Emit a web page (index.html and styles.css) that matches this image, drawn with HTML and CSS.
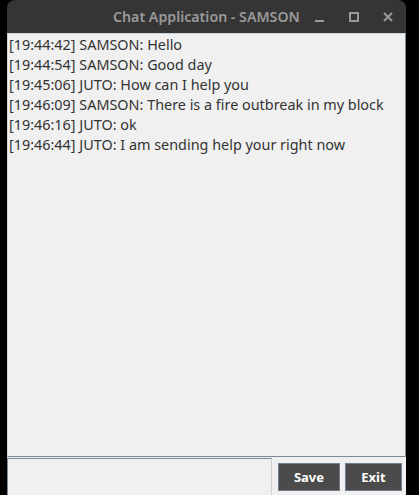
FILE: index.html
```html
<!DOCTYPE html>
<html>
<head>
<meta charset="utf-8">
<link rel="stylesheet" href="styles.css">
</head>
<body>
<div class="window">
  <div class="titlebar">
    <span class="title">Chat Application - SAMSON</span>
    <div class="controls">
      <span class="ctl min"></span>
      <span class="ctl max"></span>
      <svg class="ctl close" width="10" height="10" viewBox="0 0 10 10"><path d="M1 1L9 9M9 1L1 9" stroke="#9a9a9a" stroke-width="2"/></svg>
    </div>
  </div>
  <div class="content">
    <div class="log">
      <div class="line">[19:44:42] SAMSON: Hello</div>
      <div class="line">[19:44:54] SAMSON: Good day</div>
      <div class="line">[19:45:06] JUTO: How can I help you</div>
      <div class="line">[19:46:09] SAMSON: There is a fire outbreak in my block</div>
      <div class="line">[19:46:16] JUTO: ok</div>
      <div class="line">[19:46:44] JUTO: I am sending help your right now</div>
    </div>
    <div class="bottom">
      <div class="input"></div>
      <div class="buttons">
        <button class="btn save">Save</button>
        <button class="btn exit">Exit</button>
      </div>
    </div>
  </div>
</div>
</body>
</html>
```
FILE: styles.css
```css
html, body {
  margin: 0;
  padding: 0;
  background: #000;
  height: 495px;
  overflow: hidden;
}
.window {
  margin-left: 7px;
  width: 399px;
  height: 495px;
  display: flex;
  flex-direction: column;
  font-family: "Noto Sans", "Open Sans", sans-serif;
}
.titlebar {
  height: 33px;
  flex: none;
  background: #353535;
  border-radius: 8px 8px 0 0;
  display: flex;
  align-items: center;
}
.title {
  margin-left: 106px;
  font-size: 14.2px;
  font-weight: 600;
  color: #9a9a9a;
  white-space: nowrap;
}
.controls {
  display: flex;
  align-items: center;
  margin-left: auto;
  flex: none;
}
.ctl {
  display: block;
  flex: none;
}
.min {
  width: 9px;
  height: 2px;
  background: #9a9a9a;
  margin-top: 8px;
  margin-right: 25px;
}
.max {
  width: 6px;
  height: 6px;
  border: 2px solid #9a9a9a;
  margin-right: 24px;
}
.close {
  margin-right: 13px;
}
.content {
  flex: 1;
  background: #f0f0f0;
  display: flex;
  flex-direction: column;
}
.log {
  height: 424px;
  border: 1px solid #7d8b99;
  border-top-color: #c9d2db;
  border-left-color: #c9d2db;
  padding: 1px 0 0 1px;
  box-sizing: border-box;
  font-size: 14.4px;
  line-height: 20px;
  color: #333;
}
.bottom {
  display: flex;
  flex: 1;
  margin-top: 1px;
}
.input {
  width: 265px;
  border: 1px solid #7d8b99;
  border-bottom: none;
  border-right-color: #c9d2db;
  box-sizing: border-box;
  background: #f0f0f0;
}
.buttons {
  display: flex;
  gap: 5px;
  margin-left: 6px;
  padding-top: 5px;
}
.btn {
  height: 28px;
  border: 1px solid #6f7f8e;
  background: #4b4b4b;
  color: #fff;
  font-family: "Noto Sans", "Open Sans", sans-serif;
  font-weight: bold;
  font-size: 13px;
  padding: 0;
  margin: 0;
}
.save { width: 62px; }
.exit { width: 57px; }
```
